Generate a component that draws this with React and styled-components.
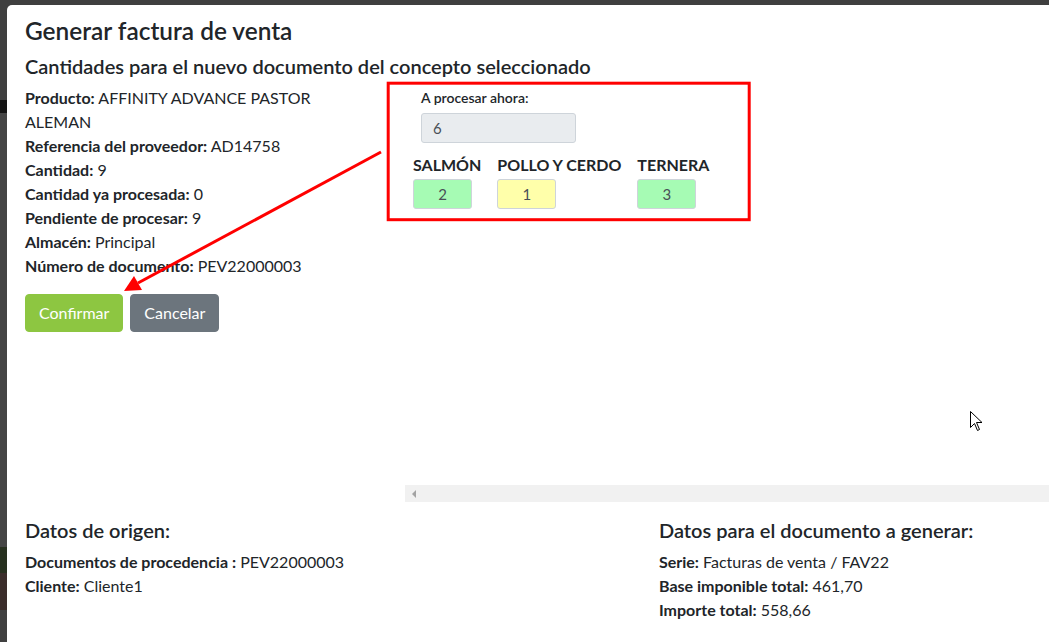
import React from "react";
import styled, { createGlobalStyle } from "styled-components";

const Global = createGlobalStyle`
  html, body { margin: 0; padding: 0; }
  body {
    width: 1049px;
    height: 642px;
    overflow: hidden;
    font-family: Lato, "Liberation Sans", sans-serif;
    color: #212529;
    background:
      linear-gradient(to bottom,
        #3f3f3f 0px, #3f3f3f 100px,
        #141414 100px, #141414 113px,
        #454545 113px, #454545 547px,
        #27301f 547px, #27301f 573px,
        #3b2d2b 573px, #3b2d2b 610px,
        #404040 610px);
  }
  * { box-sizing: border-box; }
`;

const Page = styled.div`
  position: relative;
  padding: 5px 0 0 7px;
  height: 642px;
`;

const Modal = styled.div`
  width: 1320px;
  height: 700px;
  background: #fff;
  border-radius: 5px 0 0 0;
  padding: 11px 18px 0 18px;
`;

const Title = styled.h4`
  margin: 0 0 9px 0;
  font-size: 24.4px;
  font-weight: 600;
  line-height: 1.2;
`;

const Subtitle = styled.h5`
  margin: 0 0 8px 0;
  font-size: 20px;
  font-weight: 600;
  line-height: 1.2;
`;

const TopRow = styled.div`
  display: grid;
  grid-template-columns: 345px 1fr;
  column-gap: 35px;
  align-items: start;
`;

const InfoList = styled.div`
  font-size: 16px;
  line-height: 24px;
`;

const InfoLine = styled.div``;

const Key = styled.b`
  font-weight: 700;
`;

const Buttons = styled.div`
  display: flex;
  gap: 7px;
  margin-top: 16px;
`;

const Button = styled.button`
  font-family: inherit;
  font-size: 16px;
  line-height: 24px;
  padding: 6px 13px;
  border: 1px solid ${(p) => p.$bg};
  border-radius: 4px;
  background: ${(p) => p.$bg};
  color: #fff;
  cursor: pointer;
`;

const RightCol = styled.div`
  height: 416px;
  display: flex;
  flex-direction: column;
`;

const ScrollContent = styled.div`
  flex: 1;
  padding: 1px 0 0 8px;
`;

const NowGroup = styled.div`
  padding-left: 8px;
  display: flex;
  flex-direction: column;
  gap: 5px;
`;

const SmallLabel = styled.label`
  font-size: 14px;
  font-weight: 600;
  line-height: 21px;
`;

const Field = styled.div`
  width: ${(p) => p.$w}px;
  height: 30px;
  border: 1px solid #ced4da;
  border-radius: 3px;
  background: ${(p) => p.$bg};
  color: #495057;
  font-size: 15px;
  line-height: 28px;
  padding: 0 11px;
  text-align: ${(p) => (p.$center ? "center" : "left")};
`;

const Variants = styled.div`
  display: flex;
  gap: 16px;
  margin-top: 10px;
`;

const Variant = styled.div`
  display: flex;
  flex-direction: column;
  gap: 2px;
  align-items: flex-start;
`;

const VariantLabel = styled.div`
  font-size: 16px;
  font-weight: 700;
  line-height: 24px;
`;

const HScrollbar = styled.div`
  height: 17px;
  background: #f1f1f1;
  display: flex;
  align-items: center;
  padding-left: 7px;
`;

const ArrowLeft = styled.span`
  width: 0;
  height: 0;
  border-top: 4px solid transparent;
  border-bottom: 4px solid transparent;
  border-right: 4px solid #a3a3a3;
`;

const BottomRow = styled.div`
  display: grid;
  grid-template-columns: 634px 1fr;
  margin-top: 16px;
`;

const Section = styled.div``;

const SectionTitle = styled.h5`
  margin: 0 0 8px 0;
  font-size: 20px;
  font-weight: 600;
  line-height: 1.2;
`;

const Annotations = styled.svg`
  position: absolute;
  left: 0;
  top: 0;
  pointer-events: none;
`;

export default function App() {
  return (
    <>
      <Global />
      <Page>
        <Modal>
          <Title>Generar factura de venta</Title>
          <Subtitle>Cantidades para el nuevo documento del concepto seleccionado</Subtitle>
          <TopRow>
            <div>
              <InfoList>
                <InfoLine><Key>Producto:</Key> AFFINITY ADVANCE PASTOR ALEMAN</InfoLine>
                <InfoLine><Key>Referencia del proveedor:</Key> AD14758</InfoLine>
                <InfoLine><Key>Cantidad:</Key> 9</InfoLine>
                <InfoLine><Key>Cantidad ya procesada:</Key> 0</InfoLine>
                <InfoLine><Key>Pendiente de procesar:</Key> 9</InfoLine>
                <InfoLine><Key>Almacén:</Key> Principal</InfoLine>
                <InfoLine><Key>Número de documento:</Key> PEV22000003</InfoLine>
              </InfoList>
              <Buttons>
                <Button $bg="#8dc641">Confirmar</Button>
                <Button $bg="#6c757d">Cancelar</Button>
              </Buttons>
            </div>
            <RightCol>
              <ScrollContent>
                <NowGroup>
                  <SmallLabel>A procesar ahora:</SmallLabel>
                  <Field $w={155} $bg="#e9ecef">6</Field>
                </NowGroup>
                <Variants>
                  <Variant>
                    <VariantLabel>SALMÓN</VariantLabel>
                    <Field $w={59} $bg="#a6fbb4" $center>2</Field>
                  </Variant>
                  <Variant>
                    <VariantLabel>POLLO Y CERDO</VariantLabel>
                    <Field $w={59} $bg="#ffffaa" $center>1</Field>
                  </Variant>
                  <Variant>
                    <VariantLabel>TERNERA</VariantLabel>
                    <Field $w={59} $bg="#a6fbb4" $center>3</Field>
                  </Variant>
                </Variants>
              </ScrollContent>
              <HScrollbar>
                <ArrowLeft />
              </HScrollbar>
            </RightCol>
          </TopRow>
          <BottomRow>
            <Section>
              <SectionTitle>Datos de origen:</SectionTitle>
              <InfoList>
                <InfoLine><Key>Documentos de procedencia :</Key> PEV22000003</InfoLine>
                <InfoLine><Key>Cliente:</Key> Cliente1</InfoLine>
              </InfoList>
            </Section>
            <Section>
              <SectionTitle>Datos para el documento a generar:</SectionTitle>
              <InfoList>
                <InfoLine><Key>Serie:</Key> Facturas de venta / FAV22</InfoLine>
                <InfoLine><Key>Base imponible total:</Key> 461,70</InfoLine>
                <InfoLine><Key>Importe total:</Key> 558,66</InfoLine>
              </InfoList>
            </Section>
          </BottomRow>
        </Modal>
        <Annotations width="1049" height="642" viewBox="0 0 1049 642">
          <rect x="388.2" y="83.2" width="361" height="136.5" fill="none" stroke="#ff0000" strokeWidth="3" />
          <line x1="381" y1="152" x2="138" y2="283" stroke="#ff0000" strokeWidth="3" />
          <polygon points="124,291 134,276 142,290" fill="#ff0000" />
          <path d="M970.5 411.5 L970.5 427.5 L974.5 423.5 L977.5 430.5 L979.5 429.5 L976.5 422.5 L982 422.5 Z" fill="#fff" stroke="#000" strokeWidth="1" strokeLinejoin="miter" />
        </Annotations>
      </Page>
    </>
  );
}
